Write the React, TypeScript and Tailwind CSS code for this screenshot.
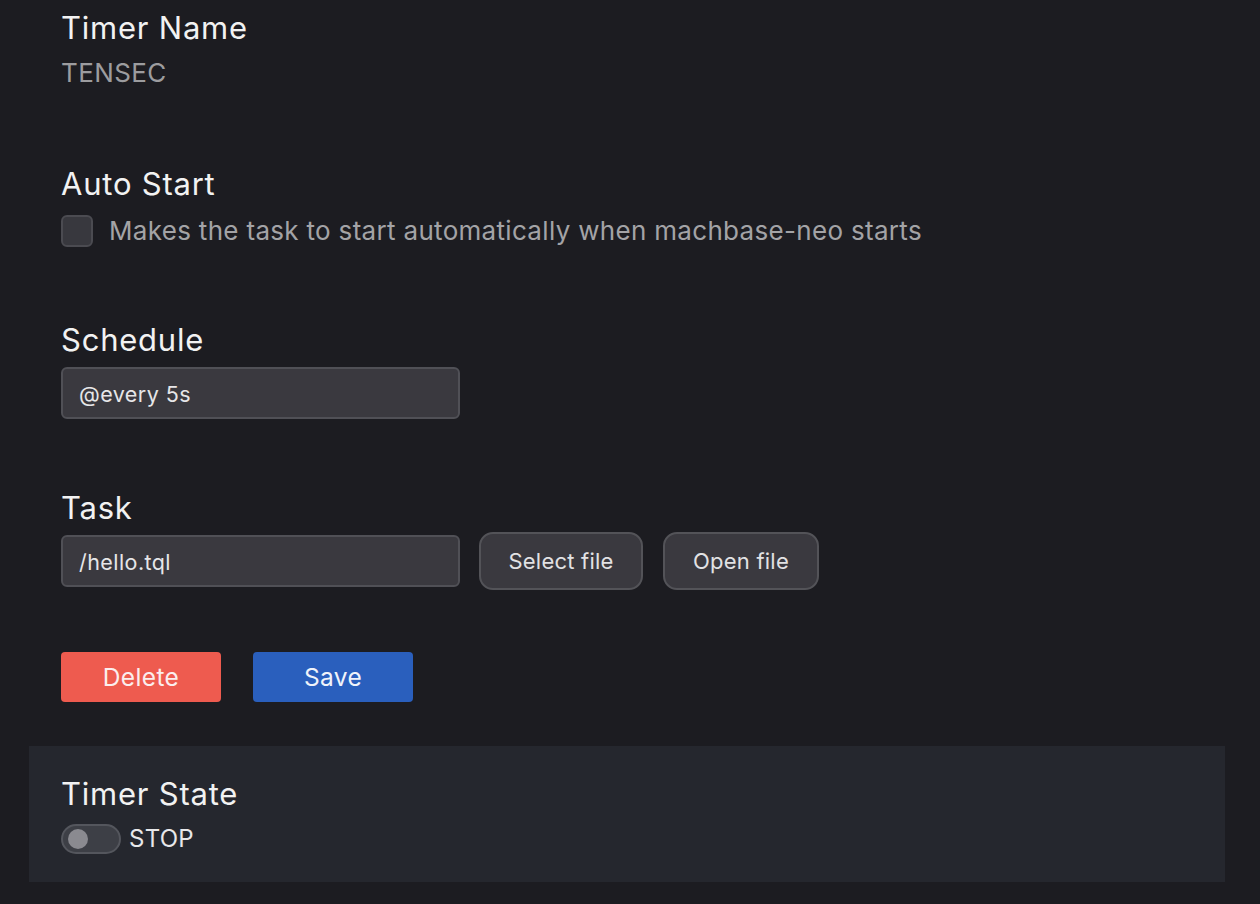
import React from "react";

export default function App() {
  return (
    <div
      className="min-h-[904px] w-full bg-[#1c1c21] pl-[29px] pr-[35px]"
      style={{ fontFamily: "Inter, 'Noto Sans', sans-serif" }}
    >
      <div className="pl-[32px] pt-[10px]">
        {/* Timer Name */}
        <div className="text-[31px] leading-[36px] tracking-[0.025em] text-[#f2f2f2]">Timer Name</div>
        <div className="mt-[11px] text-[26px] leading-[32px] tracking-[0.015em] text-[#9c9c9f]">TENSEC</div>

        {/* Auto Start */}
        <div className="mt-[77px] text-[31px] leading-[36px] tracking-[0.025em] text-[#f2f2f2]">Auto Start</div>
        <div className="mt-[13px] flex items-center gap-[16px]">
          <div className="h-[32px] w-[32px] rounded-[6px] border-2 border-[#4b4b51] bg-[#38383e]" />
          <span className="text-[26px] leading-[32px] tracking-[0.012em] text-[#a3a3a6]">
            Makes the task to start automatically when machbase-neo starts
          </span>
        </div>

        {/* Schedule */}
        <div className="mt-[75px] text-[31px] leading-[36px] tracking-[0.025em] text-[#f2f2f2]">Schedule</div>
        <div className="mt-[9px] flex h-[52px] w-[399px] items-center rounded-[6px] border-2 border-[#505056] bg-[#3a393f] px-[16px] pt-[2px] text-[21.5px] tracking-[0.02em] text-[#e6e6e8]">
          @every 5s
        </div>

        {/* Task */}
        <div className="mt-[71px] text-[31px] leading-[36px] tracking-[0.025em] text-[#f2f2f2]">Task</div>
        <div className="mt-[6px] flex items-center">
          <div className="flex h-[52px] w-[399px] items-center rounded-[6px] border-2 border-[#505056] bg-[#3a393f] px-[16px] pt-[2px] text-[21.5px] tracking-[0.02em] text-[#e6e6e8]">
            /hello.tql
          </div>
          <button className="ml-[19px] flex h-[58px] w-[164px] items-center justify-center rounded-[14px] border-2 border-[#535358] bg-[#3a393f] text-[22px] tracking-[0.01em] text-[#e2e2e4]">
            Select file
          </button>
          <button className="ml-[20px] flex h-[58px] w-[156px] items-center justify-center rounded-[14px] border-2 border-[#535358] bg-[#3a393f] text-[22px] tracking-[0.01em] text-[#e2e2e4]">
            Open file
          </button>
        </div>

        {/* Actions */}
        <div className="mt-[62px] flex gap-[32px]">
          <button className="flex h-[50px] w-[160px] items-center justify-center rounded-[4px] bg-[#ee5b4f] text-[24.5px] tracking-[0.015em] text-[#fbeeee]">
            Delete
          </button>
          <button className="flex h-[50px] w-[160px] items-center justify-center rounded-[4px] bg-[#2a5fbd] text-[24.5px] tracking-[0.015em] text-[#f0f3fa]">
            Save
          </button>
        </div>
      </div>

      {/* Timer State panel */}
      <div className="mt-[44px] w-[1196px] bg-[#25272e] pb-[28px] pl-[32px] pt-[30px]">
        <div className="text-[31px] leading-[36px] tracking-[0.025em] text-[#f2f2f2]">Timer State</div>
        <div className="mt-[12px] flex items-center gap-[8px]">
          <div className="flex h-[30px] w-[60px] items-center rounded-full border-2 border-[#54565d] bg-[#3d3f46] pl-[5px]">
            <div className="h-[20px] w-[20px] rounded-full bg-[#8a8a90]" />
          </div>
          <span className="text-[24px] leading-[30px] tracking-[0.01em] text-[#e8e8ea]">STOP</span>
        </div>
      </div>
    </div>
  );
}
